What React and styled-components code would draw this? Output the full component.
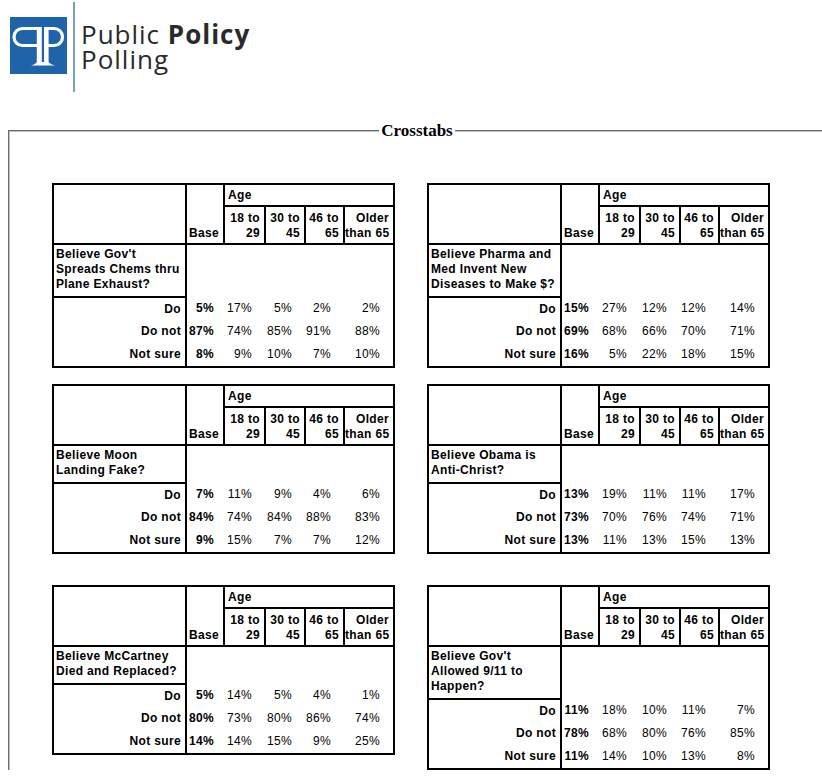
import React from "react";
import styled, { createGlobalStyle } from "styled-components";

const GlobalStyle = createGlobalStyle`
  html, body {
    margin: 0;
    padding: 0;
    background: #fff;
    overflow: hidden;
  }
`;

const Page = styled.div`
  width: 100%;
  overflow: hidden;
  padding: 0 0 40px 8px;
  box-sizing: border-box;
`;

const Header = styled.header`
  display: flex;
  align-items: flex-start;
  height: 92px;
`;

const LogoMark = styled.svg`
  display: block;
  margin: 17px 0 0 2px;
  flex: none;
`;

const Divider = styled.div`
  width: 2px;
  height: 90px;
  margin: 2px 0 0 6px;
  background: #7b9ec8;
  flex: none;
`;

const Wordmark = styled.div`
  margin: 22px 0 0 6px;
  font-family: "Open Sans", "Liberation Sans", sans-serif;
  font-size: 26px;
  line-height: 25px;
  letter-spacing: 1px;
  color: #2a2a2a;

  b {
    font-weight: 700;
  }
`;

const Frame = styled.fieldset`
  width: 816px;
  box-sizing: border-box;
  margin: 29px 0 0 0;
  padding: 42px 0 0 0;
  border: 2px groove #c0c0c0;
  border-right: none;
  border-bottom: none;
  min-width: 0;
`;

const Legend = styled.legend`
  margin: 0 auto;
  padding: 0 2px;
  font-family: "Liberation Serif", "Times New Roman", serif;
  font-weight: 700;
  font-size: 17px;
  color: #000;
`;

const Pair = styled.div`
  display: grid;
  grid-template-columns: 341px 341px;
  column-gap: 34px;
  align-items: start;
  margin: ${({ $space }) => $space}px 0 0 42px;
`;

const Crosstab = styled.table`
  width: 341px;
  table-layout: fixed;
  border-collapse: collapse;
  border: 2px solid #000;
  font-family: "Liberation Sans", Arial, sans-serif;
  font-size: 12px;
  line-height: 15px;
  letter-spacing: 0.35px;
  color: #000;

  td {
    padding: 0;
  }
`;

const BlankHead = styled.td`
  border-right: 2px solid #000;
  border-bottom: 2px solid #000;
`;

const BaseHead = styled.td`
  vertical-align: bottom;
  font-weight: 700;
  && {
    padding: 0 0 2px 2px;
  }
  border-right: 2px solid #000;
  border-bottom: 2px solid #000;
`;

const AgeHead = styled.td`
  height: 20px;
  font-weight: 700;
  vertical-align: middle;
  && {
    padding-left: 3px;
  }
  border-bottom: 2px solid #000;
`;

const BandHead = styled.td`
  height: 34px;
  font-weight: 700;
  text-align: right;
  vertical-align: bottom;
  white-space: nowrap;
  && {
    padding: 0 4px 2px 0;
  }
  border-right: 2px solid #000;
  border-bottom: 2px solid #000;
`;

const QuestionCell = styled.td`
  font-weight: 700;
  vertical-align: top;
  white-space: nowrap;
  && {
    padding: 2px 0 4px 2px;
  }
  border-right: 2px solid #000;
  border-bottom: 2px solid #000;
`;

const AnswerCell = styled.td`
  height: ${({ $last }) => ($last ? 24 : 22)}px;
  font-weight: 700;
  text-align: right;
  white-space: nowrap;
  && {
    padding-right: 4px;
  }
  border-right: 2px solid #000;
`;

const ValueCell = styled.td`
  font-weight: ${({ $base }) => ($base ? 700 : 400)};
  text-align: right;
  white-space: nowrap;
  && {
    padding-right: ${({ $base }) => ($base ? 10 : 13)}px;
  }
`;

const bands = [
  ["18 to", "29"],
  ["30 to", "45"],
  ["46 to", "65"],
  ["Older", "than 65"],
];

const answers = ["Do", "Do not", "Not sure"];

const crosstabs = [
  {
    question: ["Believe Gov't", "Spreads Chems thru", "Plane Exhaust?"],
    values: [
      ["5%", "17%", "5%", "2%", "2%"],
      ["87%", "74%", "85%", "91%", "88%"],
      ["8%", "9%", "10%", "7%", "10%"],
    ],
  },
  {
    question: ["Believe Pharma and", "Med Invent New", "Diseases to Make $?"],
    values: [
      ["15%", "27%", "12%", "12%", "14%"],
      ["69%", "68%", "66%", "70%", "71%"],
      ["16%", "5%", "22%", "18%", "15%"],
    ],
  },
  {
    question: ["Believe Moon", "Landing Fake?"],
    values: [
      ["7%", "11%", "9%", "4%", "6%"],
      ["84%", "74%", "84%", "88%", "83%"],
      ["9%", "15%", "7%", "7%", "12%"],
    ],
  },
  {
    question: ["Believe Obama is", "Anti-Christ?"],
    values: [
      ["13%", "19%", "11%", "11%", "17%"],
      ["73%", "70%", "76%", "74%", "71%"],
      ["13%", "11%", "13%", "15%", "13%"],
    ],
  },
  {
    question: ["Believe McCartney", "Died and Replaced?"],
    values: [
      ["5%", "14%", "5%", "4%", "1%"],
      ["80%", "73%", "80%", "86%", "74%"],
      ["14%", "14%", "15%", "9%", "25%"],
    ],
  },
  {
    question: ["Believe Gov't", "Allowed 9/11 to", "Happen?"],
    values: [
      ["11%", "18%", "10%", "11%", "7%"],
      ["78%", "68%", "80%", "76%", "85%"],
      ["11%", "14%", "10%", "13%", "8%"],
    ],
  },
];

const PppLogo = () => (
  <LogoMark width="57" height="57" viewBox="0 0 57 57">
    <rect width="57" height="57" fill="#1f64a8" />
    <g fill="none" stroke="#fff" strokeWidth="3.2">
      <path d="M29 11.5 H12.5 A8.5 8.5 0 0 0 12.5 28.5 H29" />
      <path d="M34 11.5 H44 A8.5 8.5 0 0 1 44 28.5 H34" />
    </g>
    <g fill="#fff">
      <rect x="26.8" y="10" width="5" height="37" />
      <rect x="34" y="10" width="4.6" height="37" />
      <path d="M21 48.4 Q26 47 27 45 H38.6 Q39.6 47 45 48.4 Z" />
    </g>
  </LogoMark>
);

const CrosstabTable = ({ question, values }) => (
  <Crosstab>
    <colgroup>
      <col style={{ width: 133 }} />
      <col style={{ width: 38 }} />
      <col style={{ width: 41 }} />
      <col style={{ width: 40 }} />
      <col style={{ width: 39 }} />
      <col style={{ width: 50 }} />
    </colgroup>
    <tbody>
      <tr>
        <BlankHead rowSpan={2} />
        <BaseHead rowSpan={2}>Base</BaseHead>
        <AgeHead colSpan={4}>Age</AgeHead>
      </tr>
      <tr>
        {bands.map(([top, bottom]) => (
          <BandHead key={top}>
            {top}
            <br />
            {bottom}
          </BandHead>
        ))}
      </tr>
      <tr>
        <QuestionCell>
          {question.map((line) => (
            <div key={line}>{line}</div>
          ))}
        </QuestionCell>
        <td colSpan={5} />
      </tr>
      {answers.map((answer, i) => (
        <tr key={answer}>
          <AnswerCell $last={i === answers.length - 1}>{answer}</AnswerCell>
          {values[i].map((v, j) => (
            <ValueCell key={j} $base={j === 0}>
              {v}
            </ValueCell>
          ))}
        </tr>
      ))}
    </tbody>
  </Crosstab>
);

const App = () => {
  return (
    <Page>
      <GlobalStyle />
      <Header>
        <PppLogo />
        <Divider />
        <Wordmark>
          Public <b>Policy</b>
          <br />
          Polling
        </Wordmark>
      </Header>
      <Frame>
        <Legend>Crosstabs</Legend>
        <Pair $space={0}>
          <CrosstabTable {...crosstabs[0]} />
          <CrosstabTable {...crosstabs[1]} />
        </Pair>
        <Pair $space={16}>
          <CrosstabTable {...crosstabs[2]} />
          <CrosstabTable {...crosstabs[3]} />
        </Pair>
        <Pair $space={31}>
          <CrosstabTable {...crosstabs[4]} />
          <CrosstabTable {...crosstabs[5]} />
        </Pair>
      </Frame>
    </Page>
  );
};

export default App;
